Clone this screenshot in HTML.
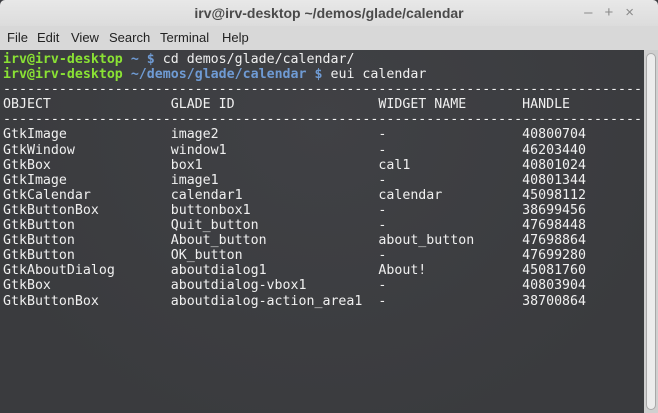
<!DOCTYPE html>
<html style="height:413px;overflow:hidden"><head><style>
body{margin:0;width:658px;height:413px;overflow:hidden;position:relative;background:#3d3e42;font-family:"Liberation Sans","DejaVu Sans",sans-serif}
#title{position:absolute;left:0;top:0;width:658px;height:26px;background:linear-gradient(#e8e8e8,#dcdcdc);border-radius:5px 5px 0 0;text-align:center;font-size:14px;font-weight:bold;color:#4a4a4a;line-height:26px}
#btns{position:absolute;right:12px;top:0;color:#8a8a8a;font-size:15px;line-height:26px;letter-spacing:12px}
#menu{position:absolute;left:0;top:26px;width:658px;height:24px;background:#d8d8d8;font-size:13px;color:#222;line-height:23px}
#menu span{position:absolute;top:0}
#term{position:absolute;left:0;top:50px;width:644px;height:363px;background:radial-gradient(ellipse at 50% 20%,#404145,#3a3b3e 80%);overflow:hidden}
pre{margin:0;position:absolute;left:3px;top:2px;font-family:"DejaVu Sans Mono",monospace;font-size:13.27px;line-height:15.1px;color:#f0f0f0}
.g{color:#8ae234;font-weight:bold}.b{color:#6f9bd4;font-weight:bold}
#sb{position:absolute;left:644px;top:50px;width:14px;height:363px;background:#cfcfcf}
#th{position:absolute;left:2px;top:3px;width:8px;height:355px;border:1px solid #a8a8a8;border-radius:5px;background:#ececec}
</style></head><body>
<div id="title">irv@irv-desktop ~/demos/glade/calendar</div>
<div id="btns">–+×</div>
<div id="menu"><span style="left:7px">File</span><span style="left:37px">Edit</span><span style="left:71px">View</span><span style="left:109px">Search</span><span style="left:160px">Terminal</span><span style="left:222px">Help</span></div>
<div id="term"><pre><span class="g">irv@irv-desktop</span> <span class="b">~ $</span> cd demos/glade/calendar/
<span class="g">irv@irv-desktop</span> <span class="b">~/demos/glade/calendar $</span> eui calendar
--------------------------------------------------------------------------------
OBJECT               GLADE ID                  WIDGET NAME       HANDLE
--------------------------------------------------------------------------------
GtkImage             image2                    -                 40800704
GtkWindow            window1                   -                 46203440
GtkBox               box1                      cal1              40801024
GtkImage             image1                    -                 40801344
GtkCalendar          calendar1                 calendar          45098112
GtkButtonBox         buttonbox1                -                 38699456
GtkButton            Quit_button               -                 47698448
GtkButton            About_button              about_button      47698864
GtkButton            OK_button                 -                 47699280
GtkAboutDialog       aboutdialog1              About!            45081760
GtkBox               aboutdialog-vbox1         -                 40803904
GtkButtonBox         aboutdialog-action_area1  -                 38700864</pre></div>
<div id="sb"><div id="th"></div></div>
</body></html>
